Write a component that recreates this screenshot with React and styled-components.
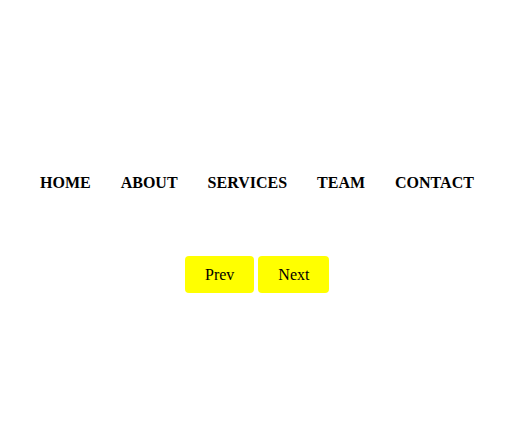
import React from 'react';
import styled, { createGlobalStyle } from 'styled-components';

const GlobalStyle = createGlobalStyle`
  body {
    margin: 0;
    background: #ffffff;
    font-family: 'Liberation Serif', 'Times New Roman', serif;
  }
`;

const Page = styled.div`
  padding-top: 174px;
`;

const Nav = styled.nav`
  display: flex;
  gap: 30px;
  padding-left: 40px;
`;

const NavItem = styled.a`
  font-size: 16px;
  line-height: 18px;
  font-weight: bold;
  color: #000;
  text-decoration: none;
`;

const Pager = styled.div`
  display: flex;
  gap: 4px;
  padding-left: 185px;
  margin-top: 64px;
`;

const PageButton = styled.button`
  height: 37px;
  padding: 0 20px;
  border: none;
  border-radius: 4px;
  background: #ffff00;
  color: #000;
  font-family: 'Liberation Serif', 'Times New Roman', serif;
  font-size: 16px;
  cursor: pointer;
`;

export default function App() {
  const links = ['HOME', 'ABOUT', 'SERVICES', 'TEAM', 'CONTACT'];
  return (
    <>
      <GlobalStyle />
      <Page>
        <Nav>
          {links.map((l) => (
            <NavItem key={l} href="#">{l}</NavItem>
          ))}
        </Nav>
        <Pager>
          <PageButton>Prev</PageButton>
          <PageButton>Next</PageButton>
        </Pager>
      </Page>
    </>
  );
}
